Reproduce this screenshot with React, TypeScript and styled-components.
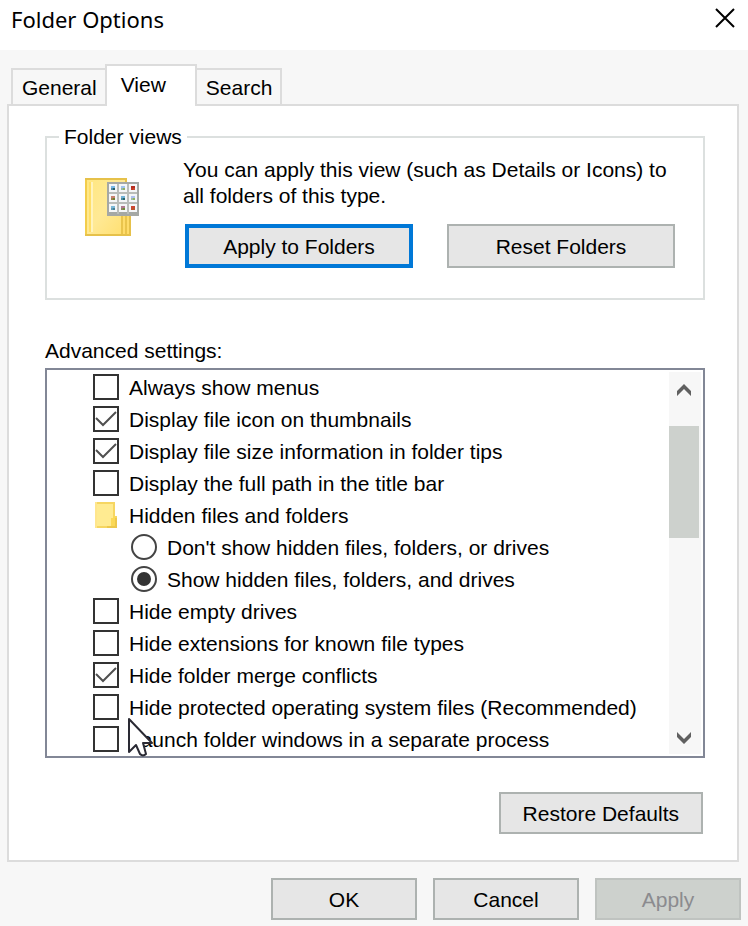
import React, { useState } from "react";
import styled, { createGlobalStyle, css } from "styled-components";

const GlobalStyle = createGlobalStyle`
  *, *::before, *::after { box-sizing: border-box; }
  body {
    margin: 0;
    background: #f7f7f7;
    color: #000;
    font-family: "Liberation Sans", Arial, sans-serif;
    font-size: 21px;
    line-height: 26px;
  }
  button, input { font: inherit; color: inherit; margin: 0; }
`;

const Dialog = styled.main`
  min-height: 100vh;
  display: flex;
  flex-direction: column;
`;

const TitleBar = styled.header`
  display: flex;
  justify-content: space-between;
  align-items: flex-start;
  height: 50px;
  padding: 6px 12px 0 11px;
  background: #fff;
`;

const Title = styled.h1`
  margin: 0;
  font: 400 22px/26px "Noto Sans", "Open Sans", sans-serif;
`;

const CloseButton = styled.button`
  display: flex;
  padding: 2px 1px;
  border: 0;
  background: none;
`;

const TabList = styled.div`
  display: flex;
  align-items: flex-end;
  margin: 14px 11px 0;
`;

const Tab = styled.button<{ $active?: boolean }>`
  height: 36px;
  padding: 2px 8px 0 9px;
  border: 2px solid #dcdcdc;
  border-bottom: 0;
  background: #f7f7f7;
  text-align: left;
  &:first-child { border-right: 0; }
  &:last-child { border-left: 0; }
  ${(p) =>
    p.$active &&
    css`
      height: 42px;
      padding: 0 29px 2px 14px;
      margin-bottom: -2px;
      background: #fff;
      z-index: 1;
    `}
`;

const Panel = styled.section`
  display: flex;
  flex-direction: column;
  margin: 0 9px 0 7px;
  padding: 18px 32px 26px 36px;
  border: 2px solid #dcdcdc;
  background: #fff;
`;

const Group = styled.fieldset`
  margin: 0;
  min-width: 0;
  padding: 6px 28px 30px 38px;
  border: 2px solid #dce0df;
`;

const Legend = styled.legend`
  margin-left: -26px;
  padding: 0 5px;
`;

const GroupBody = styled.div`
  display: flex;
  gap: 44px;
`;

const FolderArt = styled.svg`
  flex: none;
  margin-top: 22px;
`;

const GroupContent = styled.div`
  flex: 1;
  min-width: 0;
`;

const Hint = styled.p`
  margin: 0;
  padding: 1px 0 15px;
`;

const ButtonPair = styled.div`
  display: grid;
  grid-template-columns: 1fr 1fr;
  gap: 34px;
  padding-left: 2px;
`;

const PushButton = styled.button<{ $focus?: boolean; $tall?: boolean }>`
  min-width: 146px;
  height: ${(p) => (p.$tall ? 44 : 42)}px;
  padding: 2px 22px 0;
  border: 2px solid #adb2b0;
  background: #e6e6e6;
  ${(p) => p.$focus && css`border: 4px solid #0078d7;`}
  &:disabled {
    border-color: #bfc3c0;
    background: #cdd1cd;
    color: #8b8b8f;
  }
`;

const ListLabel = styled.h2`
  margin: 38px 0 4px;
  font: inherit;
`;

const ListBox = styled.div`
  position: relative;
  display: flex;
  justify-content: space-between;
  border: 2px solid #828796;
  padding: 0 2px 0 46px;
`;

const Rows = styled.div`
  padding: 1px 0;
`;

const Row = styled.label<{ $nested?: boolean }>`
  display: flex;
  align-items: center;
  gap: 10px;
  height: 32px;
  padding-left: ${(p) => (p.$nested ? 38 : 0)}px;
  white-space: nowrap;
`;

const RowHeading = styled(Row).attrs({ as: "div" })``;

const RowText = styled.span`
  padding-top: 2px;
`;

const Mark = styled.span`
  display: grid;
  flex: none;
  width: 26px;
  height: 26px;
  & > * { grid-area: 1 / 1; }
  & > svg { pointer-events: none; }
`;

const Box = styled.input`
  appearance: none;
  width: 26px;
  height: 26px;
  border: 2px solid #333;
  background: #fff;
  & + svg { visibility: hidden; }
  &:checked + svg { visibility: visible; }
`;

const Dot = styled.input`
  appearance: none;
  display: grid;
  place-items: center;
  width: 26px;
  height: 26px;
  border: 2px solid #444;
  border-radius: 50%;
  background: #fff;
  &:checked::before {
    content: "";
    width: 14px;
    height: 14px;
    border-radius: 50%;
    background: #333;
  }
`;

const ScrollBar = styled.div`
  display: flex;
  flex: none;
  flex-direction: column;
  width: 32px;
  margin: 2px 0;
  background: #f7f7f7;
`;

const ScrollButton = styled.button<{ $end?: boolean }>`
  display: flex;
  justify-content: center;
  align-items: center;
  width: 30px;
  height: ${(p) => (p.$end ? 32 : 36)}px;
  padding: 0;
  border: 0;
  background: none;
`;

const Track = styled.div`
  flex: 1;
  padding-top: 18px;
`;

const Thumb = styled.div`
  width: 30px;
  height: 112px;
  background: #cdd1cd;
`;

const Pointer = styled.svg`
  position: absolute;
  left: 81px;
  bottom: -1px;
  pointer-events: none;
`;

const PanelActions = styled.div`
  display: flex;
  justify-content: flex-end;
  padding: 34px 2px 0 0;
`;

const Footer = styled.footer`
  display: flex;
  justify-content: flex-end;
  gap: 16px;
  padding: 16px 7px 6px;
`;

const thumbs: [string, string][] = [
  ["#79b8e8", "#285f68"], ["#9fc3ee", "#8fae62"], ["#b52d20", "#c9452d"],
  ["#c98270", "#6f7e2d"], ["#73b3d8", "#26646c"], ["#aebfee", "#8fb35d"],
  ["#7db9d8", "#457f96"], ["#b27b8f", "#6b8c35"], ["#cc4632", "#b7562d"],
];

function FolderIcon() {
  return (
    <FolderArt width="54" height="58" viewBox="0 0 54 58" aria-hidden="true">
      <defs>
        <linearGradient id="cover" x1="0" y1="0" x2="1" y2="1">
          <stop offset="0" stopColor="#ffe782" />
          <stop offset=".5" stopColor="#ffe995" />
          <stop offset="1" stopColor="#ffdf70" />
        </linearGradient>
      </defs>
      <path d="M0 0H42V38H46V58H0Z" fill="#e6c14a" />
      <path d="M2 2H40V56H2Z" fill="url(#cover)" />
      <path d="M36 36H44V56H36Z" fill="#ffdc6b" />
      <path d="M36 36H38V56H36ZM40 36H42V56H40Z" fill="#eac44c" />
      <path d="M0 2H2V56H0Z" fill="#f3cd4b" />
      <path d="M4 4H6V54H4Z" fill="#ffdf68" />
      <path d="M6 4H8V54H6Z" fill="#fff3bd" />
      <path d="M22 4H54V38H22Z" fill="#a5a8a5" />
      <path d="M24 14H52V16H24ZM24 24H52V26H24ZM32 6H34V36H32ZM42 6H44V36H42Z" fill="#b9bcb9" />
      {thumbs.map(([top, bottom], i) => {
        const x = 24 + (i % 3) * 10;
        const y = 6 + Math.floor(i / 3) * 10;
        return (
          <g key={i}>
            <path d={`M${x} ${y}h8v8h-8z`} fill="#f5f6f8" />
            <path d={`M${x + 2} ${y + 2}h4v2h-4z`} fill={top} />
            <path d={`M${x + 2} ${y + 4}h4v2h-4z`} fill={bottom} />
            <path d={`M${x + 2} ${y + 4}h2v2h-2z`} fill={top} opacity=".5" />
          </g>
        );
      })}
    </FolderArt>
  );
}

function SmallFolder() {
  return (
    <svg width="26" height="26" viewBox="0 0 26 26" aria-hidden="true">
      <path d="M2 0H22V14H24V26H2Z" fill="#f6d662" />
      <path d="M4 2H20V24H4Z" fill="#ffeb91" />
      <path d="M2 0H4V26H2Z" fill="#ffe68d" />
      <path d="M18 16H20V24H18ZM20 14H22V24H20Z" fill="#fbd957" />
      <path d="M22 16H24V26H14V24H22Z" fill="#edc84c" />
    </svg>
  );
}

function Check() {
  return (
    <svg width="26" height="26" viewBox="0 0 26 26" aria-hidden="true">
      <path d="M3 12L10 19L23 6" fill="none" stroke="#505050" strokeWidth="2" />
    </svg>
  );
}

type Item = { kind: "check" | "radio" | "folder"; text: string; on?: boolean };

const items: Item[] = [
  { kind: "check", text: "Always show menus" },
  { kind: "check", text: "Display file icon on thumbnails", on: true },
  { kind: "check", text: "Display file size information in folder tips", on: true },
  { kind: "check", text: "Display the full path in the title bar" },
  { kind: "folder", text: "Hidden files and folders" },
  { kind: "radio", text: "Don't show hidden files, folders, or drives" },
  { kind: "radio", text: "Show hidden files, folders, and drives", on: true },
  { kind: "check", text: "Hide empty drives" },
  { kind: "check", text: "Hide extensions for known file types" },
  { kind: "check", text: "Hide folder merge conflicts", on: true },
  { kind: "check", text: "Hide protected operating system files (Recommended)" },
  { kind: "check", text: "Launch folder windows in a separate process" },
];

function Setting({ item }: { item: Item }) {
  if (item.kind === "folder") {
    return (
      <RowHeading>
        <Mark><SmallFolder /></Mark>
        <RowText>{item.text}</RowText>
      </RowHeading>
    );
  }
  const radio = item.kind === "radio";
  return (
    <Row $nested={radio}>
      <Mark>
        {radio ? (
          <Dot type="radio" name="hidden-files" defaultChecked={item.on} />
        ) : (
          <>
            <Box type="checkbox" defaultChecked={item.on} />
            <Check />
          </>
        )}
      </Mark>
      <RowText>{item.text}</RowText>
    </Row>
  );
}

export default function App() {
  const [tab] = useState("View");
  return (
    <>
      <GlobalStyle />
      <Dialog>
        <TitleBar>
          <Title>Folder Options</Title>
          <CloseButton aria-label="Close">
            <svg width="20" height="20" viewBox="0 0 20 20" aria-hidden="true">
              <path d="M1 1L19 19M19 1L1 19" stroke="#000" strokeWidth="2" />
            </svg>
          </CloseButton>
        </TitleBar>
        <TabList role="tablist">
          {["General", "View", "Search"].map((name) => (
            <Tab key={name} role="tab" aria-selected={name === tab} $active={name === tab}>
              {name}
            </Tab>
          ))}
        </TabList>
        <Panel role="tabpanel">
          <Group>
            <Legend>Folder views</Legend>
            <GroupBody>
              <FolderIcon />
              <GroupContent>
                <Hint>You can apply this view (such as Details or Icons) to all folders of this type.</Hint>
                <ButtonPair>
                  <PushButton $tall $focus>Apply to Folders</PushButton>
                  <PushButton $tall>Reset Folders</PushButton>
                </ButtonPair>
              </GroupContent>
            </GroupBody>
          </Group>
          <ListLabel>Advanced settings:</ListLabel>
          <ListBox>
            <Rows>
              {items.map((item) => (
                <Setting key={item.text} item={item} />
              ))}
            </Rows>
            <ScrollBar>
              <ScrollButton aria-label="Scroll up">
                <svg width="14" height="12" viewBox="0 0 14 12" aria-hidden="true">
                  <path d="M7 0L14 7V12L7 5L0 12V7Z" fill="#606060" />
                </svg>
              </ScrollButton>
              <Track><Thumb /></Track>
              <ScrollButton $end aria-label="Scroll down">
                <svg width="14" height="12" viewBox="0 0 14 12" aria-hidden="true">
                  <path d="M7 12L14 5V0L7 7L0 0V5Z" fill="#606060" />
                </svg>
              </ScrollButton>
            </ScrollBar>
            <Pointer width="25" height="40" viewBox="0 0 25 40" aria-hidden="true">
              <path
                d="M1 2V35L8 28L12 37Q15 40 18 37L15 26H24Z"
                fill="#fff" stroke="#2a2a34" strokeWidth="2" strokeLinejoin="round"
              />
            </Pointer>
          </ListBox>
          <PanelActions>
            <PushButton>Restore Defaults</PushButton>
          </PanelActions>
        </Panel>
        <Footer>
          <PushButton>OK</PushButton>
          <PushButton>Cancel</PushButton>
          <PushButton disabled>Apply</PushButton>
        </Footer>
      </Dialog>
    </>
  );
}
